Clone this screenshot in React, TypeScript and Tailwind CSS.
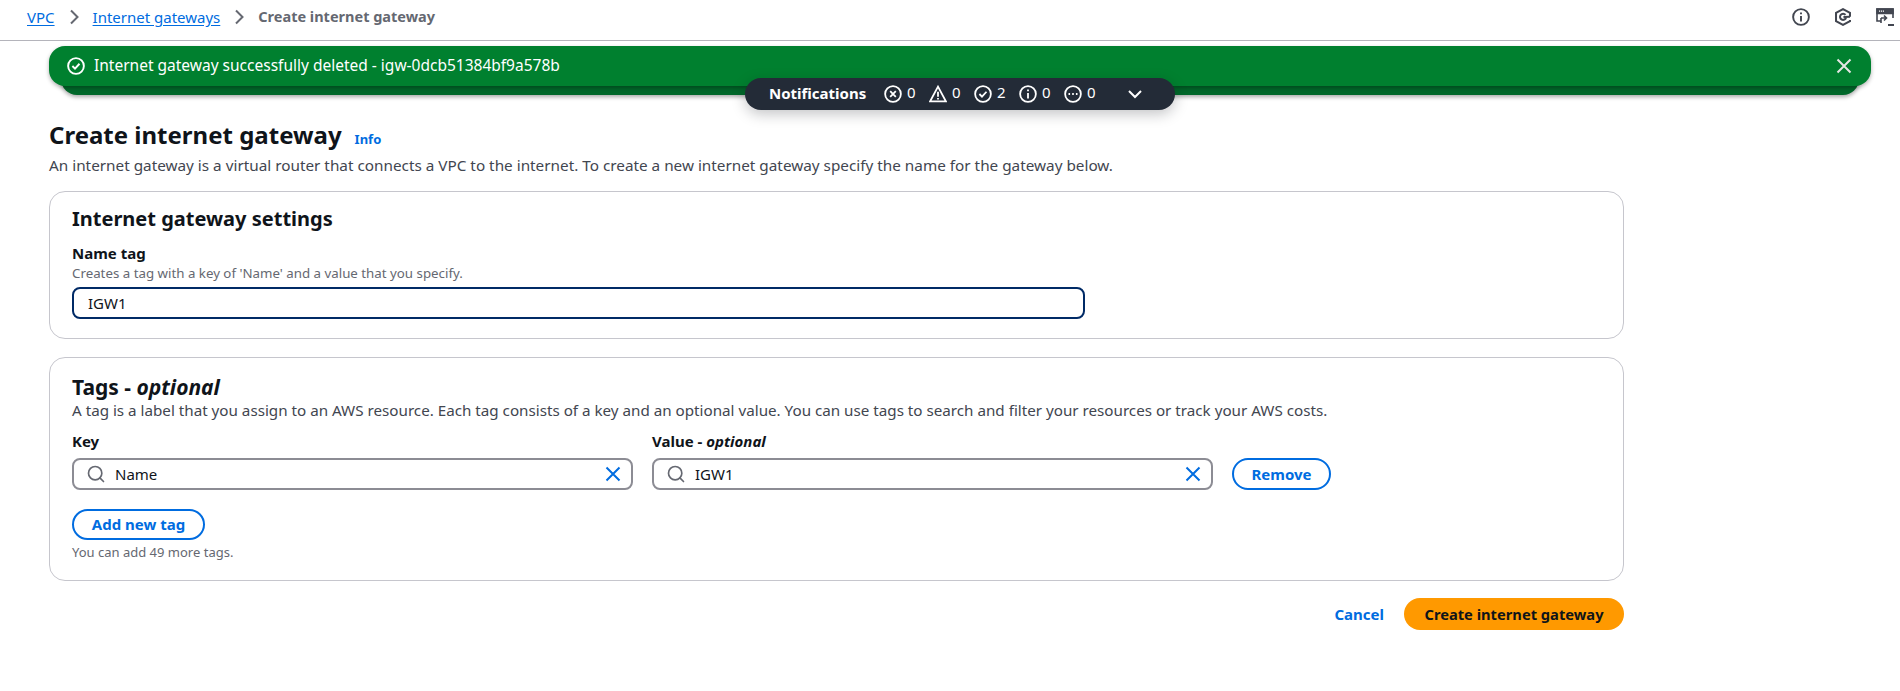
import { Search } from "lucide-react";

function Chevron() {
  return (
    <svg viewBox="0 0 16 16" className="h-4 w-4 text-[#656871]" fill="none" stroke="currentColor" strokeWidth="2">
      <path d="M5 1.5l6.5 6.5-6.5 6.5" />
    </svg>
  );
}

function Close({ className }: { className: string }) {
  return (
    <svg viewBox="0 0 16 16" className={className} fill="none" stroke="currentColor" strokeWidth="2">
      <path d="M1.5 1.5l13 13M14.5 1.5l-13 13" />
    </svg>
  );
}

function Circle({ children }: { children: React.ReactNode }) {
  return (
    <svg viewBox="0 0 16 16" className="h-[18px] w-[18px]" fill="none" stroke="currentColor" strokeWidth="1.6">
      <circle cx="8" cy="8" r="7" />
      {children}
    </svg>
  );
}

function Count({ icon, n }: { icon: React.ReactNode; n: number }) {
  return (
    <span className="flex w-[45px] items-center gap-[5px]">
      {icon}
      <span className="relative top-[-2px]">{n}</span>
    </span>
  );
}

function TagInput({ value, width }: { value: string; width: string }) {
  return (
    <div className={`flex h-8 items-center rounded-lg border-2 border-[#8c8c94] pl-[12px] pr-[10px] ${width}`}>
      <Search size={20} strokeWidth={2} className="text-[#656871]" />
      <span className="ml-[9px] flex-1 text-[15px]">{value}</span>
      <Close className="h-4 w-4 text-[#006ce0]" />
    </div>
  );
}

export default function App() {
  return (
    <div className="relative h-[691px] overflow-hidden bg-white font-['Noto_Sans',sans-serif] text-[#0f141a]">
      {/* Breadcrumbs */}
      <div className="flex h-[41px] items-center border-b border-[#b4b4bb] pb-[6px] pl-[27px] pr-[6px] text-[15px]">
        <a className="text-[#006ce0] underline underline-offset-2">VPC</a>
        <span className="mx-[11px]"><Chevron /></span>
        <a className="text-[#006ce0] underline underline-offset-2">Internet gateways</a>
        <span className="mx-[11px]"><Chevron /></span>
        <span className="text-[14.5px] font-bold text-[#656871]">Create internet gateway</span>
        <div className="ml-auto flex items-center gap-[24px] text-[#424650]">
          <svg viewBox="0 0 16 16" className="h-[18px] w-[18px]" fill="none" stroke="currentColor" strokeWidth="1.7">
            <circle cx="8" cy="8" r="7" />
            <path d="M8 7v5M8 4v1.6" />
          </svg>
          <svg viewBox="0 0 16 16" className="h-[18px] w-[18px]" fill="none" stroke="currentColor" strokeWidth="1.8">
            <path d="M14.2 10.6v1L8 15l-6.2-3.4V4.4L8 1l6.2 3.4v3.4" />
            <path d="M10.2 6.2a2.7 2.7 0 1 0 .5 2.2" />
            <path d="M8.4 8l5.8-.2" />
          </svg>
          <svg viewBox="0 0 18 18" className="h-[18px] w-[18px]" fill="none" stroke="currentColor" strokeWidth="1.6">
            <path d="M5 13H1V1h16v9" />
            <path d="M1 1h16v4.5H1z" fill="currentColor" />
            <path d="M3 3.2h5" stroke="#fff" strokeWidth="1.2" strokeDasharray="1.2 0.8" />
            <path d="M5 10h5M8 7.5l2.5 2.5L8 12.5M5 10v5" />
            <path d="M12 17h6" strokeWidth="2" />
          </svg>
        </div>
      </div>

      {/* Flash banner */}
      <div className="relative ml-[49px] mr-[29px] mt-[5px]">
        <div className="absolute bottom-[-9px] left-[12px] right-[12px] h-5 rounded-b-2xl bg-[#00682a] shadow-[0_2px_4px_rgba(0,0,0,0.35)]" />
        <div className="relative flex h-10 items-center rounded-2xl bg-[#00802f] pl-[18px] pr-[19px] text-[15.5px] text-white shadow-[0_2px_4px_rgba(0,0,0,0.3)]">
          <svg viewBox="0 0 16 16" className="h-[18px] w-[18px]" fill="none" stroke="currentColor" strokeWidth="1.7">
            <circle cx="8" cy="8" r="7" />
            <path d="M4.8 8l2.3 2.3 4-4.3" />
          </svg>
          <span className="ml-[9px]">Internet gateway successfully deleted - igw-0dcb51384bf9a578b</span>
          <Close className="ml-auto h-4 w-4 text-[#e5e5e5]" />
        </div>
      </div>

      {/* Notifications bar */}
      <div className="absolute left-[745px] top-[78px] flex h-8 w-[430px] items-center rounded-2xl bg-[#232b37] pl-[24px] text-[15px] text-white shadow-[0_4px_14px_rgba(15,20,26,0.25)]">
        <span className="relative top-[-1px] w-[115px] font-bold">Notifications</span>
        <div className="flex items-center">
          <Count n={0} icon={<Circle><path d="M5.5 5.5l5 5M10.5 5.5l-5 5" /></Circle>} />
          <Count n={0} icon={
            <svg viewBox="0 0 16 16" className="h-[18px] w-[18px]" fill="none" stroke="currentColor" strokeWidth="1.6">
              <path d="M8 1.5L15 14.5H1z" />
              <path d="M8 6v4.5M8 11.5v1.4" />
            </svg>
          } />
          <Count n={2} icon={<Circle><path d="M4.8 8l2.3 2.3 4-4.3" /></Circle>} />
          <Count n={0} icon={<Circle><path d="M8 7v5M8 4v1.6" /></Circle>} />
          <Count n={0} icon={<Circle><path d="M4 8h1.4M7.3 8h1.4M10.6 8H12" /></Circle>} />
        </div>
        <svg viewBox="0 0 16 16" className="ml-[18px] h-4 w-4" fill="none" stroke="currentColor" strokeWidth="2">
          <path d="M2 5l6 6 6-6" />
        </svg>
      </div>

      <main className="ml-[49px] w-[1575px]">
        <div className="mt-[32px] flex items-baseline">
          <h1 className="text-2xl font-bold leading-[33px]">Create internet gateway</h1>
          <a className="ml-[13px] text-[13px] font-bold text-[#006ce0]">Info</a>
        </div>
        <p className="mt-[4px] text-[15.3px] leading-5 text-[#424650]">
          An internet gateway is a virtual router that connects a VPC to the internet. To create a new internet gateway specify the name for the gateway below.
        </p>

        <section className="mt-[16px] h-[148px] rounded-2xl border border-[#c6c6cd] px-[22px] pt-[15px]">
          <h2 className="text-xl font-bold leading-6">Internet gateway settings</h2>
          <div className="mt-[12px] text-[15px] font-bold leading-5">Name tag</div>
          <div className="mt-[2px] text-[13.3px] leading-4 text-[#656871]">Creates a tag with a key of 'Name' and a value that you specify.</div>
          <div className="mt-[6px] flex h-8 w-[1013px] items-center rounded-lg border-2 border-[#002a66] pl-[14px] text-[15px]">IGW1</div>
        </section>

        <section className="mt-[18px] h-[224px] rounded-2xl border border-[#c6c6cd] px-[22px] pt-[17px]">
          <h2 className="text-[21px] font-bold leading-6">
            Tags - <em className="font-bold">optional</em>
          </h2>
          <p className="mt-[1px] text-[15.2px] leading-5 text-[#424650]">
            A tag is a label that you assign to an AWS resource. Each tag consists of a key and an optional value. You can use tags to search and filter your resources or track your AWS costs.
          </p>
          <div className="mt-[11px] flex items-end gap-[19px]">
            <div>
              <div className="mb-[7px] text-[15px] font-bold leading-5">Key</div>
              <TagInput value="Name" width="w-[561px]" />
            </div>
            <div>
              <div className="mb-[7px] text-[15px] font-bold leading-5">
                Value - <em>optional</em>
              </div>
              <TagInput value="IGW1" width="w-[561px]" />
            </div>
            <button className="h-8 w-[99px] rounded-full border-2 border-[#006ce0] text-[15px] font-bold text-[#006ce0]">Remove</button>
          </div>
          <button className="mt-[19px] h-[31px] w-[133px] rounded-full border-2 border-[#006ce0] text-[15px] font-bold text-[#006ce0]">Add new tag</button>
          <div className="mt-[4px] text-[13px] leading-4 text-[#656871]">You can add 49 more tags.</div>
        </section>

        <div className="mt-[17px] flex items-center justify-end">
          <a className="text-[15px] font-bold text-[#006ce0]">Cancel</a>
          <button className="ml-[20px] h-8 w-[220px] rounded-full bg-[#ff9900] text-[14.7px] font-bold">Create internet gateway</button>
        </div>
      </main>
    </div>
  );
}
